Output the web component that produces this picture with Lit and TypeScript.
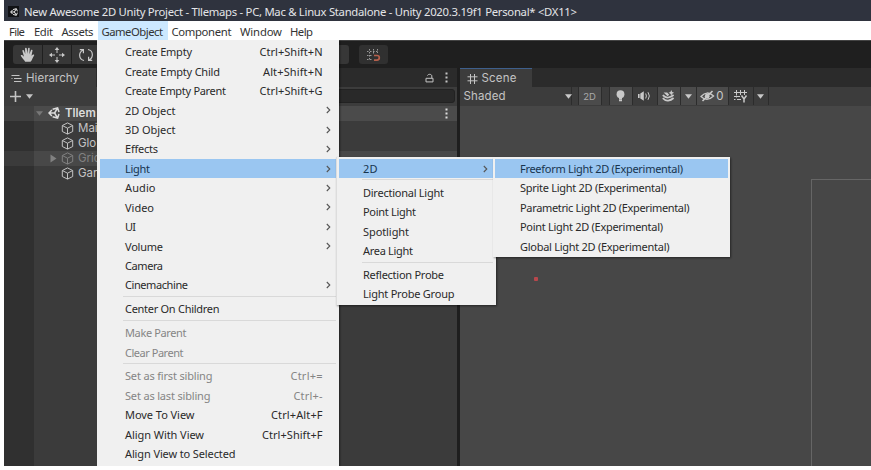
import { LitElement, html, css, svg, nothing } from "lit";
import { customElement, property } from "lit/decorators.js";

type Item = { t: string; w: number; key?: string; kw?: number; sub?: boolean; off?: boolean; hot?: boolean } | null;

/** Text tracked so that it takes up exactly the given advance width. */
@customElement("fit-text")
class FitText extends LitElement {
  @property() text = "";
  @property({ type: Number }) w = 0;
  static styles = css`
    :host { display: inline-block; white-space: pre; flex: none; }
    span { display: inline-block; }
  `;
  firstUpdated() {
    const el = this.renderRoot.querySelector("span") as HTMLElement;
    const natural = el.getBoundingClientRect().width;
    el.style.letterSpacing = `${(this.w - natural) / Math.max(1, this.text.length - 1)}px`;
    this.style.width = `${this.w}px`;
  }
  render() {
    return html`<span>${this.text}</span>`;
  }
}

const gameObjectMenu: Item[] = [
  { t: "Create Empty", w: 67, key: "Ctrl+Shift+N", kw: 63 },
  { t: "Create Empty Child", w: 95, key: "Alt+Shift+N", kw: 59.5 },
  { t: "Create Empty Parent", w: 101, key: "Ctrl+Shift+G", kw: 63 },
  { t: "2D Object", w: 50.5, sub: true },
  { t: "3D Object", w: 50.5, sub: true },
  { t: "Effects", w: 33, sub: true },
  { t: "Light", w: 25, sub: true, hot: true },
  { t: "Audio", w: 30.5, sub: true },
  { t: "Video", w: 29, sub: true },
  { t: "UI", w: 11, sub: true },
  { t: "Volume", w: 38, sub: true },
  { t: "Camera", w: 38 },
  { t: "Cinemachine", w: 63, sub: true },
  null,
  { t: "Center On Children", w: 94.5 },
  null,
  { t: "Make Parent", w: 61.5, off: true },
  { t: "Clear Parent", w: 58.5, off: true },
  null,
  { t: "Set as first sibling", w: 87.5, key: "Ctrl+=", kw: 32, off: true },
  { t: "Set as last sibling", w: 85.5, key: "Ctrl+-", kw: 29, off: true },
  { t: "Move To View", w: 69.5, key: "Ctrl+Alt+F", kw: 51.5 },
  { t: "Align With View", w: 79, key: "Ctrl+Shift+F", kw: 60.5 },
  { t: "Align View to Selected", w: 110.5 },
];
const lightMenu: Item[] = [
  { t: "2D", w: 14.5, sub: true, hot: true },
  null,
  { t: "Directional Light", w: 81 },
  { t: "Point Light", w: 53 },
  { t: "Spotlight", w: 46 },
  { t: "Area Light", w: 50 },
  null,
  { t: "Reflection Probe", w: 81 },
  { t: "Light Probe Group", w: 91.5 },
];
const light2dMenu: Item[] = [
  { t: "Freeform Light 2D (Experimental)", w: 163, hot: true },
  { t: "Sprite Light 2D (Experimental)", w: 146.5 },
  { t: "Parametric Light 2D (Experimental)", w: 169.5 },
  { t: "Point Light 2D (Experimental)", w: 143 },
  { t: "Global Light 2D (Experimental)", w: 149.5 },
];

const icon = (w: number, h: number, body: unknown) =>
  html`<svg width=${w} height=${h} viewBox="0 0 ${w} ${h}" fill="none" stroke="currentColor">${body}</svg>`;

const unity = (s: number) => html`<svg width=${s} height=${s} viewBox="0 0 12 12" fill="none" stroke="currentColor" stroke-width="1.5">
  <path d="M4.6 2.3 9.6 1 11 5M11 7 9.6 11 4.6 9.7M3.9 2.9 1 6l2.9 3.1M1.2 6h5.4M6.6 6l2.6-4.4M6.6 6l2.6 4.4"/></svg>`;
const cube = icon(13, 13, svg`<path d="M6.5 .9 11.7 3.5v6L6.5 12.1 1.3 9.5v-6ZM1.5 3.6l5 2.6 5-2.6M6.5 6.2V12"/>`);
const down = html`<svg width="7" height="5" viewBox="0 0 7 5" fill="currentColor"><path d="M0 .3h7L3.5 4.8Z"/></svg>`;
const hand = icon(15, 16, svg`<path stroke="none" fill="currentColor" d="M5.2 14.8C4 13 2.2 11 .9 9.1c-.5-.9.6-1.6 1.3-1L4 9.8 2.4 4.1c-.2-1.1 1.3-1.4 1.6-.4l1.3 3.4L5 1.8c0-1.2 1.7-1.3 1.8-.1l.6 5L8 1.4c.2-1 1.8-.8 1.7.2l-.3 5.7 1.5-4.1c.4-.9 1.8-.5 1.6.4l-1 5.2 1.2-1.1c.7-.7 1.9-.1 1.4.8-1.6 2.2-1.8 4.7-3.6 6.3Z"/>`);
const move = icon(16, 16, svg`<path d="M8 2v4M8 10v4M2 8h4M10 8h4"/><path stroke="none" fill="currentColor" d="M8 0l2.3 3H5.7ZM8 16l2.3-3H5.7ZM0 8l3-2.3v4.6ZM16 8l-3-2.3v4.6Z"/>`);
const rotate = icon(16, 14, svg`<path stroke-width="1.2" d="M6 12.5C.6 11.5.2 4.5 5 2M10 1.5c5.4 1 5.8 8 1 10.5M1.8 1.6h3.6v3.6M14.2 12.4h-3.6V8.8"/>`);
const snap = icon(16, 14, svg`<path stroke="#999" stroke-dasharray="1.5 1.5" d="M3.5 1v11M7.5 1v5M11.5 1v4M1 3.5h12M1 7.5h6M1 11.5h6"/><path stroke="#b5604c" stroke-width="1.7" d="M8 7.5h3a2.3 2.3 0 0 1 0 4.6H8"/>`);
const list = icon(11, 9, svg`<path d="M.5 1.5h8M3 4.5h7.5M3 7.5h7.5M.5 4.5h1"/>`);
const lock = icon(9, 10, svg`<path d="M1 5.3h7v3.6H1ZM2.5 2.5C3 .9 6.8.8 6.8 3v2"/>`);
const dots = html`<svg width="3" height="11" viewBox="0 0 3 11" fill="currentColor"><path d="M.5 .5h2v2h-2ZM.5 4.5h2v2h-2ZM.5 8.5h2v2h-2Z"/></svg>`;
const hash = icon(11, 10, svg`<path d="M3.5 0v10M7.5 0v10M.5 2.8h10M.5 6.8h10"/>`);
const bulb = icon(9, 12, svg`<circle cx="4.5" cy="4.2" r="3.9" fill="currentColor" stroke="none"/><path d="M3 8h3M3 10.2h3" stroke-width="2"/>`);
const audio = icon(13, 10, svg`<path stroke="none" fill="currentColor" d="M0 3h1.6v4H0ZM2.3 2.6 5.8.2v9.6L2.3 7.4Z"/><path d="M7.7 2.5q1.4 2.5 0 5M10 1.2q2.7 3.8 0 7.6"/>`);
const effects = icon(13, 12, svg`<path stroke-width="1.7" d="M.8 5.2q2.6 2.8 5.4 2.3T11.6 5M.8 8.2q2.6 2.8 5.4 2.4T11.6 8"/><path stroke="none" fill="currentColor" d="M1.6 2.6h3.6l2 2.2L5.6 6.3ZM9.3 0l.9 1.9 1.9.9-1.9.9-.9 1.9-.9-1.9-1.9-.9 1.9-.9Z"/>`);
const eye = icon(15, 12, svg`<path stroke-width="1.3" d="M1 6.5Q7-.2 13.6 6 7 12.3 1 6.5Z"/><circle cx="7.2" cy="6.2" r="2.4" fill="currentColor" stroke="none"/><path stroke-width="1.6" d="M2.5 11 12.5 1"/>`);
const grid = icon(14, 13, svg`<path d="M2.5 0v5M6.5 0v5M10.5 0v5M0 2.5h13M0 6.5h6M0 9.5h1.5M3 9.5h4M2.5 5.5v2"/><path stroke-width="1.5" d="M7.5 5.5 10 9l2.5-3.5M10 8.5v4"/>`);

@customElement("app-root")
class AppRoot extends LitElement {
  static styles = css`
    :host { display: block; width: 871px; height: 470px; background: #fff; overflow: hidden; position: relative; }
    * { box-sizing: border-box; }
    svg { display: block; flex: none; }
    .window { margin-left: 4px; height: 466px; background: #3a3a3a; display: flex; flex-direction: column; overflow: hidden; color: #c4c4c4; font: 11.5px/1 Inter, sans-serif; }
    .title { height: 21px; flex: none; background: #2f333e; color: #e4e5e8; display: flex; align-items: center; gap: 6px; padding: 2px 0 0 4px; font: 11.3px/18px "Noto Sans", sans-serif; }
    .logo { width: 11px; height: 11px; margin-right: -1px; background: #101114; color: #eee; display: grid; place-items: center; }
    .menubar { height: 19px; flex: none; background: #fff; color: #333; display: flex; padding-left: 1px; font: 11.3px/21px "Noto Sans", sans-serif; }
    .menubar div { padding-left: 4px; height: 19px; }
    .menubar .open { background: #cce8ff; }
    .tools { height: 28px; flex: none; background: #1f1f1f; border-top: 1px solid #444; display: flex; align-items: flex-start; padding: 4px 0 0 8.5px; }
    .tools div { height: 19px; background: #373737; display: grid; place-items: center; width: 28px; margin-right: 1px; color: #c8c8c8; }
    .tools .first { width: 29px; border-radius: 3px 0 0 3px; }
    .tools .rest { width: 248.5px; margin-right: 10px; border-radius: 0 3px 3px 0; }
    .tools .snap { width: 29px; border-radius: 3px; background: #303030; }
    .panels { flex: 1; display: flex; gap: 2.5px; background: #1e1e1e; min-height: 0; }
    .panel { display: flex; flex-direction: column; }
    .hier { width: 453px; background: #3b3b3b; }
    .scene { flex: 1; background: #474747; }
    .strip { height: 19px; flex: none; background: #2b2b2b; display: flex; align-items: stretch; }
    .tab { background: #3c3c3c; display: flex; align-items: center; gap: 4px; padding: 2px 0 0 7px; }
    .hier .tab { width: 92px; }
    .scene .tab { width: 72px; border-top: 1.5px solid #3e5f8c; }
    .spacer { flex: 1; }
    .stripicons { display: flex; align-items: center; gap: 11px; padding-right: 9px; }
    .bar { height: 18.5px; flex: none; display: flex; align-items: center; background: #3c3c3c; }
    .hier .bar { padding: 0 2px 0 6px; gap: 5px; }
    .search { margin-left: auto; width: 250px; height: 14px; background: #292929; border: 1px solid #222; border-radius: 3px; }
    .plus { width: 11px; height: 11px; }
    .rows { flex: 1; width: 453px; background: linear-gradient(90deg, #303030 30px, #3b3b3b 30px); }
    .row { height: 15px; display: flex; align-items: center; gap: 4px; padding-left: 57px; }
    .row.root { height: 15.5px; padding: 0 9px 0 32px; background: linear-gradient(90deg, #404040 30px, #4b4b4b 30px); color: #ddd; font-weight: 600; }
    .root .name { margin-left: 1px; }
    .row.sel { padding-left: 46px; background: linear-gradient(90deg, #3b3b3b 30px, #484848 30px); color: #818181; }
    .name { white-space: pre; line-height: 15px; }
    .tri { width: 8px; color: #787878; }
    .scene .bar { padding-left: 4px; }
    .shaded { width: 101px; display: flex; align-items: center; padding-top: 1px; }
    .btn { height: 18px; display: grid; place-items: center; border-right: 1px solid #2c2c2c; background: #3c3c3c; color: #c9c9c9; }
    .btn.on { background: #4b4b4b; }
    .small { font-size: 9.5px; color: #aaa; padding-top: 1px; }
    .count { display: flex; align-items: center; gap: 1px; }
    .view { flex: 1; position: relative; overflow: hidden; }
    .frame { position: absolute; left: 351px; top: 73px; right: -2px; bottom: -2px; border: 1.5px solid #666; }
    .dot { position: absolute; left: 74.5px; top: 171.5px; width: 4px; height: 4px; border-radius: 1px; background: #b8474c; }
    .menu { position: absolute; background: #f0f0f0; color: #2a2a2a; font: 11px/19.45px "Noto Sans", sans-serif; box-shadow: 1px 1px 2px #0007; }
    .main { left: 97px; top: 40px; width: 242px; height: 426px; padding: 2.2px 3px 0 2.5px; clip-path: inset(0 -4px 0 0); }
    .light { left: 336px; top: 157px; width: 159.5px; height: 147.5px; padding: 1.8px 2.5px 0 1.5px; border: 0 solid #ddd; border-left-width: 1px; }
    .two { left: 493px; top: 157px; width: 237px; height: 100px; padding: 1.8px 2px 0 1.5px; }
    .item { height: 19.45px; display: flex; justify-content: space-between; padding-left: 25.5px; padding-right: 13.5px; align-items: center; }
    .light .item { padding-left: 24.5px; padding-right: 5px; }
    .main .item.sub { padding-right: 5px; }
    .item.hot { background: #9ac6f1; color: #17344e; }
    .item.off { color: #858585; }
    .sep { height: 4.4px; padding-top: 1.2px; margin-left: 23px; }
    .sep::before { content: ""; display: block; height: 1px; background: #d9d9d9; }
    .chev { color: #555; }
  `;

  menu(cls: string, items: Item[]) {
    return html`<div class="menu ${cls}">${items.map((i) =>
      i
        ? html`<div class="item ${i.hot ? "hot" : ""} ${i.off ? "off" : ""} ${i.sub ? "sub" : ""}">
            <fit-text .text=${i.t} .w=${i.w}></fit-text>
            ${i.key ? html`<fit-text .text=${i.key} .w=${i.kw!}></fit-text>` : nothing}
            ${i.sub ? html`<svg class="chev" width="5" height="8" viewBox="0 0 5 8" fill="none" stroke="currentColor" stroke-width="1.1"><path d="M.8 1 3.8 4 .8 7"/></svg>` : nothing}
          </div>`
        : html`<div class="sep"></div>`
    )}</div>`;
  }

  top(t: string, w: number, box: number, open = false) {
    return html`<div class=${open ? "open" : ""} style="width:${box}px"><fit-text .text=${t} .w=${w}></fit-text></div>`;
  }

  render() {
    return html`
      <div class="window">
        <div class="title"><span class="logo">${unity(8)}</span>
          <fit-text .text=${"New Awesome 2D Unity Project - Tllemaps - PC, Mac & Linux Standalone - Unity 2020.3.19f1 Personal* <DX11>"} .w=${553}></fit-text></div>
        <div class="menubar">
          ${this.top("File", 16, 25)}${this.top("Edit", 19, 27.5)}${this.top("Assets", 32, 40)}
          ${this.top("GameObject", 61.5, 70, true)}${this.top("Component", 60, 68.5)}
          ${this.top("Window", 42, 50)}${this.top("Help", 23, 30)}
        </div>
        <div class="tools"><div class="first">${hand}</div><div>${move}</div><div>${rotate}</div><div class="rest"></div><div class="snap">${snap}</div></div>
        <div class="panels">
          <div class="panel hier">
            <div class="strip"><div class="tab">${list}<fit-text .text=${"Hierarchy"} .w=${53}></fit-text></div><div class="spacer"></div>
              <div class="stripicons">${lock}${dots}</div></div>
            <div class="bar"><svg class="plus" viewBox="0 0 11 11" stroke="currentColor" stroke-width="1.6"><path d="M5.5 0v11M0 5.5h11"/></svg>${down}<div class="search"></div></div>
            <div class="rows">
              <div class="row root"><span class="tri">${down}</span>${unity(12)}<span class="name">Tllem</span><div class="spacer"></div>${dots}</div>
              <div class="row">${cube}<span class="name">Mai</span></div>
              <div class="row">${cube}<span class="name">Glo</span></div>
              <div class="row sel"><svg width="7" height="9" viewBox="0 0 7 9" fill="currentColor"><path d="M.5.5 6.5 4.5.5 8.5Z"/></svg>${cube}<span class="name">Grid</span></div>
              <div class="row">${cube}<span class="name">Gar</span></div>
            </div>
          </div>
          <div class="panel scene">
            <div class="strip"><div class="tab">${hash}<fit-text .text=${"Scene"} .w=${35}></fit-text></div></div>
            <div class="bar">
              <div class="shaded"><fit-text .text=${"Shaded"} .w=${42}></fit-text></div>
              <div class="btn" style="width:7px">${down}</div>
              <div class="btn" style="width:7px"></div>
              <div class="btn on small" style="width:23px">2D</div>
              <div class="btn" style="width:8px"></div>
              <div class="btn on" style="width:23px">${bulb}</div>
              <div class="btn" style="width:25px">${audio}</div>
              <div class="btn on" style="width:23px">${effects}</div>
              <div class="btn on" style="width:16px">${down}</div>
              <div class="btn on" style="width:32px"><span class="count">${eye}0</span></div>
              <div class="btn" style="width:25px">${grid}</div>
              <div class="btn" style="width:15px">${down}</div>
            </div>
            <div class="view"><div class="frame"></div><div class="dot"></div></div>
          </div>
        </div>
      </div>
      ${this.menu("main", gameObjectMenu)}${this.menu("light", lightMenu)}${this.menu("two", light2dMenu)}
    `;
  }
}
